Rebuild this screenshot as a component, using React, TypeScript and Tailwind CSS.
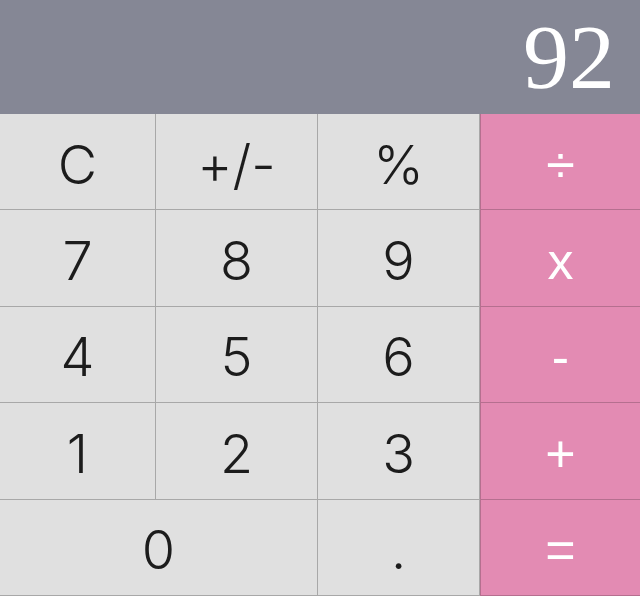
import React from 'react';

type Key = {
  label: string;
  op?: boolean;
  wide?: boolean;
};

const keys: Key[] = [
  { label: 'C' },
  { label: '+/-' },
  { label: '%' },
  { label: '÷', op: true },
  { label: '7' },
  { label: '8' },
  { label: '9' },
  { label: 'x', op: true },
  { label: '4' },
  { label: '5' },
  { label: '6' },
  { label: '-', op: true },
  { label: '1' },
  { label: '2' },
  { label: '3' },
  { label: '+', op: true },
  { label: '0', wide: true },
  { label: '.' },
  { label: '=', op: true },
];

const App: React.FC = () => {
  return (
    <div className="w-[640px] h-[596px] flex flex-col overflow-hidden bg-[#e0e0e0]">
      {/* Display */}
      <div className="h-[114px] shrink-0 bg-[#858795] flex items-center justify-end pr-[25px]">
        <span className="font-[family-name:Liberation_Serif,Times,serif] text-[92px] leading-none text-white">
          92
        </span>
      </div>

      {/* Keypad */}
      <div className="flex-1 grid grid-cols-[156px_162px_162px_160px] grid-rows-5">
        {keys.map((k) => (
          <button
            key={k.label}
            className={
              k.op
                ? "flex items-center justify-center pt-[6px] border-b border-l border-black/20 bg-[#e38bb3] text-white font-[family-name:Liberation_Sans,Arial,sans-serif] text-[52px] leading-none"
                : k.wide
                ? "col-span-2 flex items-center justify-center pt-[6px] border-b border-r border-black/25 text-[#1c1c1c] font-[family-name:Inter,sans-serif] font-light text-[54px] leading-none"
                : "flex items-center justify-center pt-[6px] border-b border-r border-black/25 text-[#1c1c1c] font-[family-name:Inter,sans-serif] font-light text-[54px] leading-none"
            }
          >
            {k.label}
          </button>
        ))}
      </div>
    </div>
  );
};

export default App;
